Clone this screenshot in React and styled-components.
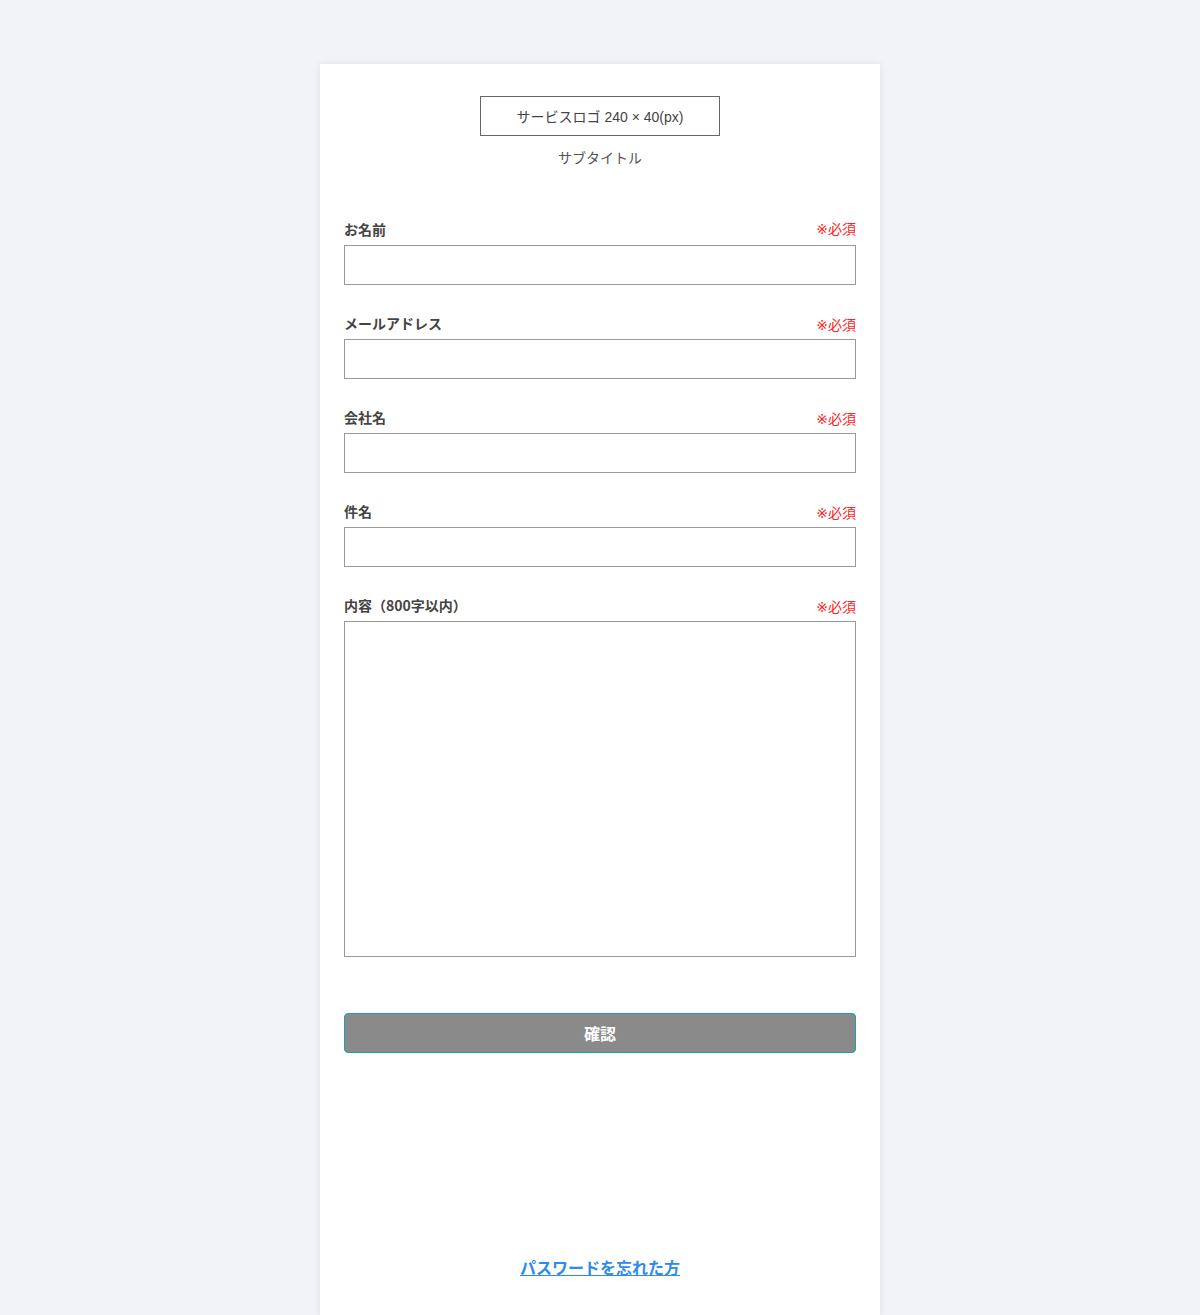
import styled, { createGlobalStyle } from "styled-components";

const GlobalStyle = createGlobalStyle`
  body {
    margin: 0;
    background: #f2f3f7;
    font-family: "Liberation Sans", "Noto Sans CJK JP", sans-serif;
    color: #444;
  }
  * { box-sizing: border-box; }
`;

const Page = styled.div`
  display: flex;
  justify-content: center;
  padding-top: 64px;
`;

const Card = styled.div`
  width: 560px;
  background: #fff;
  box-shadow: 0 0 8px rgba(0, 0, 0, 0.08);
  padding: 32px 24px 40px;
`;

const Header = styled.div`
  display: flex;
  flex-direction: column;
  align-items: center;
`;

const Logo = styled.div`
  width: 240px;
  height: 40px;
  border: 1px solid #666;
  display: flex;
  align-items: center;
  justify-content: center;
  font-size: 14px;
  color: #444;
`;

const Subtitle = styled.p`
  margin: 12px 0 0;
  font-size: 14px;
  line-height: 20px;
  color: #555;
`;

const Form = styled.form`
  margin-top: 51px;
  display: flex;
  flex-direction: column;
  gap: 28px;
`;

const Field = styled.div`
  display: flex;
  flex-direction: column;
  gap: 6px;
`;

const LabelRow = styled.div`
  display: flex;
  justify-content: space-between;
  align-items: flex-end;
  height: 20px;
`;

const Label = styled.label`
  font-family: "Noto Sans CJK JP", sans-serif;
  font-size: 14px;
  font-weight: 700;
  line-height: 20px;
  color: #444;
`;

const Required = styled.span`
  font-family: "DejaVu Sans", "Noto Sans CJK JP", sans-serif;
  font-size: 14px;
  line-height: 18px;
  color: #ff2222;
  margin-bottom: ${(p) => (p.$low ? "-1px" : "1px")};
`;

const Input = styled.input`
  width: 100%;
  height: 40px;
  border: 1px solid #999;
  border-radius: 0;
  padding: 0 10px;
  font-size: 14px;
  background: #fff;
`;

const TextArea = styled.textarea`
  width: 100%;
  height: 336px;
  border: 1px solid #999;
  border-radius: 0;
  padding: 10px;
  font-size: 14px;
  resize: none;
  display: block;
`;

const Submit = styled.button`
  margin-top: 28px;
  width: 100%;
  height: 40px;
  background: #8a8a8a;
  border: 1px solid #16a2b0;
  border-radius: 4px;
  color: #fff;
  font-family: "Noto Sans CJK JP", sans-serif;
  font-size: 16px;
  font-weight: 700;
  cursor: pointer;
`;

const Footer = styled.div`
  margin-top: 202px;
  display: flex;
  justify-content: center;
`;

const ForgotLink = styled.a`
  font-family: "Noto Sans CJK JP", sans-serif;
  font-size: 16px;
  font-weight: 700;
  line-height: 24px;
  color: #2e8be8;
  text-decoration: underline;
  cursor: pointer;
`;

const fields = [
  { label: "お名前", low: false },
  { label: "メールアドレス", low: true },
  { label: "会社名", low: true },
  { label: "件名", low: true },
];

const App = () => {
  return (
    <>
      <GlobalStyle />
      <Page>
        <Card>
          <Header>
            <Logo>サービスロゴ 240 × 40(px)</Logo>
            <Subtitle>サブタイトル</Subtitle>
          </Header>
          <Form onSubmit={(e) => e.preventDefault()}>
            {fields.map((f) => (
              <Field key={f.label}>
                <LabelRow>
                  <Label>{f.label}</Label>
                  <Required $low={f.low}>※必須</Required>
                </LabelRow>
                <Input type="text" />
              </Field>
            ))}
            <Field>
              <LabelRow>
                <Label>内容（800字以内）</Label>
                <Required $low>※必須</Required>
              </LabelRow>
              <TextArea />
            </Field>
            <Submit type="submit">確認</Submit>
          </Form>
          <Footer>
            <ForgotLink>パスワードを忘れた方</ForgotLink>
          </Footer>
        </Card>
      </Page>
    </>
  );
};

export default App;
